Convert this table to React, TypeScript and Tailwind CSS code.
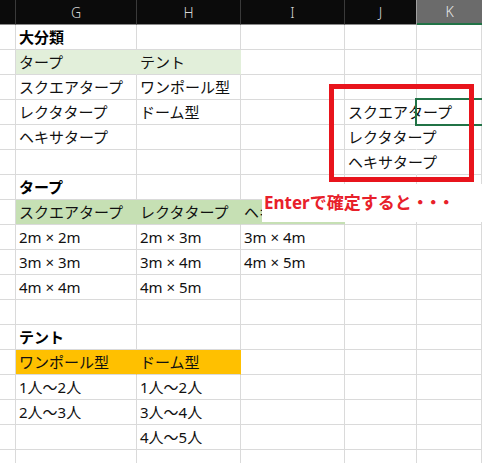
import React from 'react';

type Fill = 'none' | 'light' | 'green' | 'orange';

interface CellData {
  text?: string;
  bold?: boolean;
  fill?: Fill;
  overflow?: boolean;
}

const COLS = ['G', 'H', 'I', 'J', 'K'];

// each row: G, H, I, J, K
const rows: CellData[][] = [
  [{ text: '大分類', bold: true }, {}, {}, {}, {}],
  [{ text: 'タープ', fill: 'light' }, { text: 'テント', fill: 'light' }, {}, {}, {}],
  [{ text: 'スクエアタープ' }, { text: 'ワンポール型' }, {}, {}, {}],
  [{ text: 'レクタタープ' }, { text: 'ドーム型' }, {}, { text: 'スクエアタープ', overflow: true }, {}],
  [{ text: 'ヘキサタープ' }, {}, {}, { text: 'レクタタープ', overflow: true }, {}],
  [{}, {}, {}, { text: 'ヘキサタープ', overflow: true }, {}],
  [{ text: 'タープ', bold: true }, {}, {}, {}, {}],
  [
    { text: 'スクエアタープ', fill: 'green' },
    { text: 'レクタタープ', fill: 'green' },
    { text: 'ヘキサタープ', fill: 'green' },
    {},
    {},
  ],
  [{ text: '2m × 2m' }, { text: '2m × 3m' }, { text: '3m × 4m' }, {}, {}],
  [{ text: '3m × 3m' }, { text: '3m × 4m' }, { text: '4m × 5m' }, {}, {}],
  [{ text: '4m × 4m' }, { text: '4m × 5m' }, {}, {}, {}],
  [{}, {}, {}, {}, {}],
  [{ text: 'テント', bold: true }, {}, {}, {}, {}],
  [{ text: 'ワンポール型', fill: 'orange' }, { text: 'ドーム型', fill: 'orange' }, {}, {}, {}],
  [{ text: '1人～2人' }, { text: '1人～2人' }, {}, {}, {}],
  [{ text: '2人～3人' }, { text: '3人～4人' }, {}, {}, {}],
  [{}, { text: '4人～5人' }, {}, {}, {}],
  [{}, {}, {}, {}, {}],
];

const fillClass: Record<Fill, string> = {
  none: 'border-r-[#dadada]',
  light: 'bg-[#e2efda] border-r-[#e2efda]',
  green: 'bg-[#c6e0b4] border-r-[#c6e0b4]',
  orange: 'bg-[#ffc000] border-r-[#ffc000]',
};

const Cell: React.FC<{ cell: CellData }> = ({ cell }) => {
  const fill = cell.fill || 'none';
  return (
    <div
      className={`h-[25px] flex items-center pl-[3px] border-b border-b-[#dadada] border-r whitespace-nowrap overflow-visible text-[15px] leading-none text-[#111] ${
        cell.overflow ? 'border-r-transparent' : fillClass[fill]
      } ${cell.fill && cell.fill !== 'none' ? fillClass[fill] : ''} ${cell.bold ? 'font-bold text-black' : ''}`}
    >
      {cell.text}
    </div>
  );
};

export default function App() {
  return (
    <div
      className="relative w-[482px] h-[463px] overflow-hidden bg-white"
      style={{ fontFamily: '"Noto Sans", "Noto Sans CJK JP", sans-serif' }}
    >
      <div className="grid grid-cols-[16px_121px_104px_104px_72px_1fr]">
        {/* Column header */}
        <div className="h-[25px] bg-[#0b0b0b] border-r border-r-[#3a3a3a] border-b border-b-[#8a8a8a]" />
        {COLS.map((c) =>
          c === 'K' ? (
            <div
              key={c}
              className="h-[25px] bg-[#6b6b6b] border-b-2 border-b-[#217346] flex items-center justify-center text-[14px] font-light text-[#e8e8e8]"
            >
              {c}
            </div>
          ) : (
            <div
              key={c}
              className={`h-[25px] bg-[#0b0b0b] border-b border-b-[#8a8a8a] border-r flex items-center justify-center text-[14px] font-light text-[#d8d8d8] ${
                c === 'J' ? 'border-r-[#a0a0a0]' : 'border-r-[#3a3a3a]'
              }`}
            >
              {c}
            </div>
          )
        )}

        {/* Body rows */}
        {rows.map((row, r) => (
          <React.Fragment key={r}>
            <div className="h-[25px] border-r border-r-[#dadada] border-b border-b-[#dadada]" />
            {row.map((cell, i) => (
              <Cell key={i} cell={cell} />
            ))}
          </React.Fragment>
        ))}
      </div>

      {/* Active cell */}
      <div className="absolute left-[415px] top-[98px] w-[80px] h-[28px] border-2 border-[#217346]" />

      {/* Red highlight box */}
      <div className="absolute left-[329px] top-[84px] w-[145px] h-[98px] border-[5px] border-[#e8141c]" />

      {/* Note */}
      <div className="absolute left-[262px] top-[184px] w-[220px] h-[38px] bg-white flex items-center pl-[2px] pb-[1px]">
        <span className="text-[17px] font-bold text-[#e8202a] leading-none whitespace-nowrap">
          Enterで確定すると<span className="tracking-[-4px]">・・・</span>
        </span>
      </div>
    </div>
  );
}
